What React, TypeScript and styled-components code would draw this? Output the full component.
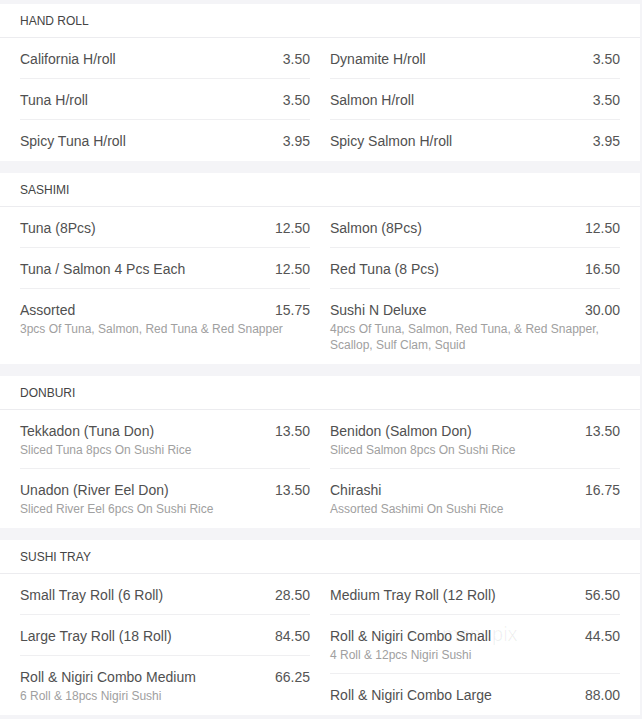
import styled, { createGlobalStyle } from "styled-components";

type Item = { name: string; price: string; desc?: string };
type Section = { title: string; left: Item[]; right: Item[] };

const menu: Section[] = [
  {
    title: "Hand Roll",
    left: [
      { name: "California H/roll", price: "3.50" },
      { name: "Tuna H/roll", price: "3.50" },
      { name: "Spicy Tuna H/roll", price: "3.95" },
    ],
    right: [
      { name: "Dynamite H/roll", price: "3.50" },
      { name: "Salmon H/roll", price: "3.50" },
      { name: "Spicy Salmon H/roll", price: "3.95" },
    ],
  },
  {
    title: "Sashimi",
    left: [
      { name: "Tuna (8Pcs)", price: "12.50" },
      { name: "Tuna / Salmon 4 Pcs Each", price: "12.50" },
      {
        name: "Assorted",
        price: "15.75",
        desc: "3pcs Of Tuna, Salmon, Red Tuna & Red Snapper",
      },
    ],
    right: [
      { name: "Salmon (8Pcs)", price: "12.50" },
      { name: "Red Tuna (8 Pcs)", price: "16.50" },
      {
        name: "Sushi N Deluxe",
        price: "30.00",
        desc: "4pcs Of Tuna, Salmon, Red Tuna, & Red Snapper, Scallop, Sulf Clam, Squid",
      },
    ],
  },
  {
    title: "Donburi",
    left: [
      { name: "Tekkadon (Tuna Don)", price: "13.50", desc: "Sliced Tuna 8pcs On Sushi Rice" },
      { name: "Unadon (River Eel Don)", price: "13.50", desc: "Sliced River Eel 6pcs On Sushi Rice" },
    ],
    right: [
      { name: "Benidon (Salmon Don)", price: "13.50", desc: "Sliced Salmon 8pcs On Sushi Rice" },
      { name: "Chirashi", price: "16.75", desc: "Assorted Sashimi On Sushi Rice" },
    ],
  },
  {
    title: "Sushi Tray",
    left: [
      { name: "Small Tray Roll (6 Roll)", price: "28.50" },
      { name: "Large Tray Roll (18 Roll)", price: "84.50" },
      { name: "Roll & Nigiri Combo Medium", price: "66.25", desc: "6 Roll & 18pcs Nigiri Sushi" },
    ],
    right: [
      { name: "Medium Tray Roll (12 Roll)", price: "56.50" },
      { name: "Roll & Nigiri Combo Small", price: "44.50", desc: "4 Roll & 12pcs Nigiri Sushi" },
      { name: "Roll & Nigiri Combo Large", price: "88.00" },
    ],
  },
];

const GlobalStyle = createGlobalStyle`
  body {
    margin: 0;
    background: #f4f4f7;
    font-family: "Liberation Sans", Arial, sans-serif;
  }
`;

const Page = styled.main`
  position: relative;
  width: 640px;
  padding-top: 4px;
  display: flex;
  flex-direction: column;
  gap: 12px;
`;

const Card = styled.section`
  background: #fff;
`;

const CardHeader = styled.h2`
  margin: 0;
  padding: 0 20px;
  height: 33px;
  line-height: 34px;
  font-size: 12px;
  font-weight: normal;
  text-transform: uppercase;
  color: #444;
  border-bottom: 1px solid #ececef;
`;

const Columns = styled.div`
  display: grid;
  grid-template-columns: 1fr 1fr;
  padding: 0 10px;
`;

const Column = styled.ul`
  list-style: none;
  margin: 0;
  padding: 0 10px;
`;

const Row = styled.li<{ $last: boolean }>`
  padding: 11px 0 9px;
  border-bottom: 1px solid ${(p) => (p.$last ? "#fff" : "#efeff1")};
`;

const Line = styled.div`
  display: flex;
  justify-content: space-between;
  font-size: 14px;
  line-height: 20px;
`;

const Name = styled.span`
  color: #505050;
`;

const Price = styled.span`
  color: #555;
`;

const Desc = styled.p`
  margin: 1px 0 1px;
  font-size: 12px;
  line-height: 16px;
  color: #a0a0a0;
  padding-right: 16px;
`;

const Watermark = styled.div`
  position: absolute;
  left: 442px;
  top: 623px;
  font-size: 20px;
  color: rgba(0, 0, 0, 0.06);
  pointer-events: none;
`;

function MenuList({ items }: { items: Item[] }) {
  return (
    <Column>
      {items.map((item, i) => (
        <Row key={item.name} $last={i === items.length - 1}>
          <Line>
            <Name>{item.name}</Name>
            <Price>{item.price}</Price>
          </Line>
          {item.desc && <Desc>{item.desc}</Desc>}
        </Row>
      ))}
    </Column>
  );
}

export default function App() {
  return (
    <>
      <GlobalStyle />
      <Page>
        {menu.map((section) => (
          <Card key={section.title}>
            <CardHeader>{section.title}</CardHeader>
            <Columns>
              <MenuList items={section.left} />
              <MenuList items={section.right} />
            </Columns>
          </Card>
        ))}
        <Watermark>menupix</Watermark>
      </Page>
    </>
  );
}
